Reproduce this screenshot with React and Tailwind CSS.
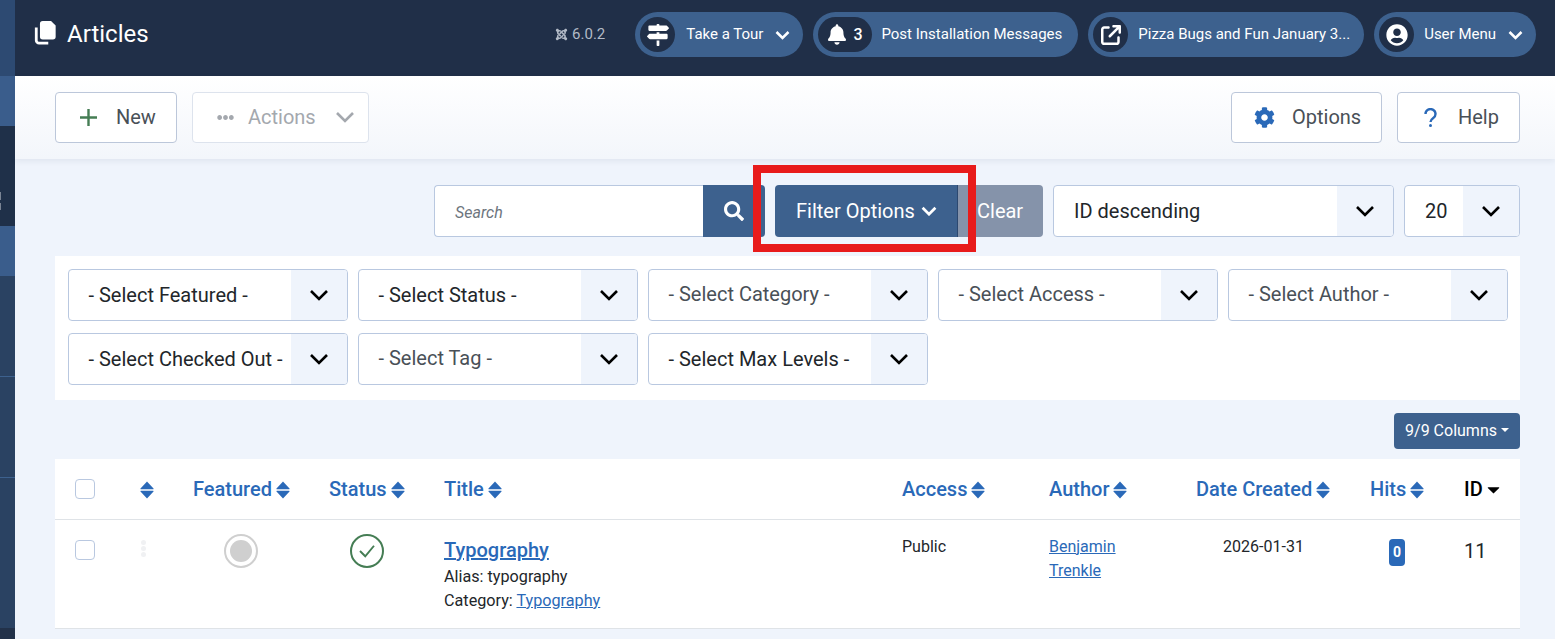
import { FaBell, FaCog, FaEllipsisH, FaJoomla, FaSearch, FaUserCircle, FaMapSigns } from "react-icons/fa";
import { FaArrowUpRightFromSquare } from "react-icons/fa6";

function Chevron({ className, weight = "2.6" }) {
  return (
    <svg viewBox="0 0 20 12" fill="none" stroke="currentColor" strokeWidth={weight} className={className}>
      <path d="M2 2l8 8 8-8" />
    </svg>
  );
}

function ArticlesIcon() {
  return (
    <svg viewBox="0 0 24 26" className="w-[23px] h-[24px] mb-[3px] text-white" fill="currentColor">
      <path d="M9 0h9l5 5v12a3 3 0 0 1-3 3H9a3 3 0 0 1-3-3V3a3 3 0 0 1 3-3z" />
      <path d="M4 6v14a3 3 0 0 0 3 3h10" fill="none" stroke="currentColor" strokeWidth="3" transform="translate(-2 1)" />
    </svg>
  );
}

function Pill({ icon, label, chevron, circle = "w-[35px]", text }) {
  return (
    <div className="flex items-center h-[45px] rounded-full bg-[#3d618e] pl-[5px] text-white">
      <span className={`flex items-center justify-center h-[35px] rounded-full bg-[#202f48] ${circle}`}>{icon}</span>
      <span className={`text-[15px] ${text}`}>{label}</span>
      {chevron && <Chevron weight="3.4" className="w-[15px] h-[10px] ml-[12px] mr-[13px]" />}
    </div>
  );
}

function ToolButton({ children, className }) {
  return (
    <button className={`flex items-center h-[51px] pb-[1px] rounded-[4px] border border-[#bcc7da] bg-white text-[20px] text-[#495057] ${className}`}>
      {children}
    </button>
  );
}

function Select({ label, muted, pad = "pl-[20px]", className = "" }) {
  return (
    <div className={`flex items-stretch h-[52px] rounded-[4px] border border-[#b9c8e0] bg-white overflow-hidden ${className}`}>
      <span className={`flex-1 flex items-center ${pad} text-[20px] whitespace-nowrap overflow-hidden ${muted ? "text-[#495057] pb-[2px]" : "text-[#22262a]"}`}>{label}</span>
      <span className="flex items-center justify-center w-[56px] bg-[#eff4fc] text-black">
        <Chevron className="w-[20px] h-[12px]" />
      </span>
    </div>
  );
}

function Sort({ className = "ml-[4px]" }) {
  return (
    <svg viewBox="0 0 14 18" fill="#2a69b8" className={`inline-block w-[14px] h-[18px] align-[-3px] ${className}`}>
      <path d="M7 0.5L13.5 7.5a0.5 0.5 0 0 1-0.4 0.8H0.9a0.5 0.5 0 0 1-0.4-0.8z" />
      <path d="M7 17.5L13.5 10.5a0.5 0.5 0 0 0-0.4-0.8H0.9a0.5 0.5 0 0 0-0.4 0.8z" />
    </svg>
  );
}

const filters = [
  ["- Select Featured -", false],
  ["- Select Status -", false],
  ["- Select Category -", true],
  ["- Select Access -", true],
  ["- Select Author -", true],
  ["- Select Checked Out -", false],
  ["- Select Tag -", true],
  ["- Select Max Levels -", false],
];

const th = "pl-[15px] text-left font-medium text-[20px] text-[#2a69b8] whitespace-nowrap";
const td = "pl-[15px] align-top";

export default function App() {
  return (
    <div className="relative flex h-[639px] w-[1555px] overflow-hidden bg-[#eff4fc] font-['Roboto',sans-serif]">
      {/* sidebar sliver */}
      <aside className="flex flex-col w-[15px] shrink-0 bg-[#2a4262]">
        <div className="h-[76px] bg-[#2d4a72]" />
        <div className="h-[50px] bg-[#3a5d8c]" />
        <div className="h-[100px] pt-[66px] bg-[#1f3049]">
          <div className="w-[1px] h-[8px] bg-[#7a8494]" />
          <div className="w-[1px] h-[7px] mt-[3px] bg-[#7a8494]" />
        </div>
        <div className="h-[50px] bg-[#3a5d8c]" />
        <div className="h-[101px] border-b border-[#3d618e]" />
        <div className="h-[101px] border-b border-[#3d618e]" />
        <div className="flex-1" />
        <div className="h-[11px] bg-[#223149]" />
      </aside>

      <main className="flex-1 min-w-0">
        <header className="flex items-center h-[76px] bg-[#202f48] pl-[19px] pr-[19px] pb-[7px]">
          <ArticlesIcon />
          <h1 className="ml-[10px] mb-[2px] text-[24px] text-white">Articles</h1>
          <div className="ml-auto flex items-center gap-[10px]">
            <span className="flex items-center mr-[20px] text-[15px] text-[#b2bac6]">
              <FaJoomla className="w-[13px] h-[13px] mr-[4px]" />
              6.0.2
            </span>
            <Pill icon={<FaMapSigns className="w-[22px] h-[22px]" />} label="Take a Tour" chevron text="ml-[11px]" />
            <Pill
              icon={<span className="flex items-center gap-[7px] text-[16px] font-medium"><FaBell className="w-[18px] h-[21px]" />3</span>}
              circle="w-[54px]"
              label="Post Installation Messages"
              text="ml-[9px] mr-[16px]"
            />
            <Pill icon={<FaArrowUpRightFromSquare className="w-[20px] h-[20px]" />} label="Pizza Bugs and Fun January 3..." text="ml-[10px] mr-[14px]" />
            <Pill icon={<FaUserCircle className="w-[22px] h-[22px]" />} label="User Menu" chevron text="ml-[10px]" />
          </div>
        </header>

        <div className="flex items-center h-[83px] pl-[40px] pr-[35px] bg-gradient-to-b from-white to-[#f3f6fb] shadow-[0_2px_6px_rgba(32,47,72,0.08)]">
          <ToolButton className="w-[122px] pl-[24px]">
            <svg viewBox="0 0 17 17" fill="none" stroke="#457d54" strokeWidth="2.4" className="w-[17px] h-[17px]">
              <path d="M8.5 0v17M0 8.5h17" />
            </svg>
            <span className="ml-[19px]">New</span>
          </ToolButton>
          <ToolButton className="w-[177px] ml-[15px] pl-[24px] border-[#dde3ed] text-[#a4a8ae]">
            <FaEllipsisH className="w-[17px] h-[17px]" />
            <span className="ml-[14px]">Actions</span>
            <Chevron className="w-[20px] h-[12px] ml-[19px]" />
          </ToolButton>
          <ToolButton className="w-[151px] ml-auto pl-[22px]">
            <FaCog className="w-[21px] h-[21px] text-[#2a69b8]" />
            <span className="ml-[17px]">Options</span>
          </ToolButton>
          <ToolButton className="w-[123px] ml-[15px] pl-[26px]">
            <svg viewBox="0 0 13 19" fill="none" stroke="#2a69b8" strokeWidth="2.4" className="w-[13px] h-[19px]">
              <path d="M1.5 6a5 4.8 0 1 1 7.8 3.9C7.4 11.2 6.5 12 6.5 14" />
              <circle cx="6.5" cy="17.5" r="1.5" fill="#2a69b8" stroke="none" />
            </svg>
            <span className="ml-[21px]">Help</span>
          </ToolButton>
        </div>

        <div className="pl-[40px] pr-[35px]">
          <div className="flex justify-end gap-[10px] mt-[26px]">
            <div className="flex h-[52px] w-[331px]">
              <div className="flex items-center flex-1 pl-[20px] pt-[3px] rounded-l-[4px] border border-r-0 border-[#b9c8e0] bg-white text-[16px] italic text-[#6d757e]">Search</div>
              <button className="flex items-center justify-center w-[62px] rounded-r-[4px] bg-[#3d618e] text-white">
                <FaSearch className="w-[20px] h-[20px]" />
              </button>
            </div>
            <div className="flex h-[52px]">
              <button className="flex items-center w-[183px] pl-[21px] rounded-l-[4px] bg-[#3d618e] border-r border-[#2c4870] text-[20px] text-white">
                Filter Options
                <Chevron weight="3.4" className="w-[16px] h-[10px] ml-[6px]" />
              </button>
              <button className="w-[85px] text-left rounded-r-[4px] bg-[#8593aa] pl-[19px] text-[20px] text-white">Clear</button>
            </div>
            <Select label="ID descending" className="w-[341px]" />
            <Select label="20" className="w-[116px]" />
          </div>

          <div className="grid grid-cols-[repeat(5,280px)] gap-x-[10px] gap-y-[12px] mt-[19px] pt-[13px] pb-[15px] px-[13px] bg-white">
            {filters.map(([label, muted]) => (
              <Select key={label} label={label} muted={muted} pad="pl-[19.5px]" />
            ))}
          </div>

          <div className="flex justify-end mt-[13px]">
            <button className="flex items-center h-[36px] px-[11px] rounded-[4px] bg-[#3d618e] text-[16px] text-white">
              9/9 Columns
              <span className="ml-[4px] mb-[2px] border-x-[4px] border-x-transparent border-t-[4px] border-t-white" />
            </button>
          </div>

          <table className="mt-[10px] w-full table-fixed bg-white border-collapse">
            <colgroup>
              <col className="w-[70px]" />
              <col className="w-[53px]" />
              <col className="w-[136px]" />
              <col className="w-[115px]" />
              <col className="w-[458px]" />
              <col className="w-[147px]" />
              <col className="w-[147px]" />
              <col className="w-[174px]" />
              <col className="w-[94px]" />
              <col className="w-[71px]" />
            </colgroup>
            <thead>
              <tr className="h-[60px] border-b border-[#dfe3e7]">
                <th className="pl-[20px] text-left">
                  <span className="block w-[20px] h-[20px] rounded-[4px] border border-[#b9c8e0]" />
                </th>
                <th className={th}><Sort className="" /></th>
                <th className={th}>Featured<Sort /></th>
                <th className={th}>Status<Sort /></th>
                <th className={th}>Title<Sort /></th>
                <th className={th}>Access<Sort /></th>
                <th className={th}>Author<Sort /></th>
                <th className={th}>Date Created<Sort /></th>
                <th className={th}>Hits<Sort /></th>
                <th className={`${th} !text-black`}>
                  ID
                  <svg viewBox="0 0 14 8" fill="black" className="inline-block w-[13px] h-[7px] ml-[4px] align-[2px]">
                    <path d="M7 7.5L13.5 1a0.5 0.5 0 0 0-0.4-0.8H0.9A0.5 0.5 0 0 0 0.5 1z" />
                  </svg>
                </th>
              </tr>
            </thead>
            <tbody>
              <tr className="h-[109px] border-b border-[#dfe3e7] text-[16px] text-[#22262a]">
                <td className="pl-[20px] pt-[20px] align-top">
                  <span className="block w-[20px] h-[20px] rounded-[4px] border border-[#b9c8e0]" />
                </td>
                <td className={`${td} pt-[20px]`}>
                  <span className="flex flex-col gap-[1px] w-[5px] ml-[1px] items-center">
                    <span className="w-[5px] h-[5px] rounded-full bg-[#f0f1f3]" />
                    <span className="w-[5px] h-[5px] rounded-full bg-[#f0f1f3]" />
                    <span className="w-[5px] h-[5px] rounded-full bg-[#f0f1f3]" />
                  </span>
                </td>
                <td className={`${td} pt-[14px]`}>
                  <span className="ml-[31px] flex items-center justify-center w-[34px] h-[34px] rounded-full border-[2px] border-[#cfcfcf]">
                    <span className="w-[22px] h-[22px] rounded-full bg-[#cfcfcf]" />
                  </span>
                </td>
                <td className={`${td} pt-[14px]`}>
                  <span className="ml-[21px] flex items-center justify-center w-[34px] h-[34px] rounded-full border-[2px] border-[#457d54] text-[#457d54]">
                    <svg viewBox="0 0 20 16" fill="none" stroke="currentColor" strokeWidth="2.2" className="w-[18px] h-[14px]"><path d="M2 8l6 6L18 2" /></svg>
                  </span>
                </td>
                <td className={`${td} pt-[16px]`}>
                  <a className="block text-[20px] font-medium leading-[28px] text-[#2a69b8] underline">Typography</a>
                  <div className="mt-[1px] leading-[24px] text-[16.2px]">Alias: typography</div>
                  <div className="leading-[24px] text-[16.2px]">Category: <a className="text-[#2a69b8] underline">Typography</a></div>
                </td>
                <td className={`${td} pt-[15px] leading-[24px]`}>Public</td>
                <td className={`${td} pt-[15px] leading-[24px] pr-[60px]`}><a className="text-[#2a69b8] underline">Benjamin Trenkle</a></td>
                <td className={`${td} pt-[15px] leading-[24px] pr-[24px] text-center`}>2026-01-31</td>
                <td className={`${td} pt-[19px]`}>
                  <span className="ml-[19px] flex items-center justify-center w-[16px] h-[27px] rounded-[4px] bg-[#2a69b8] text-white text-[14px] font-bold">0</span>
                </td>
                <td className={`${td} pt-[16px] text-[20px]`}>11</td>
              </tr>
            </tbody>
          </table>
        </div>
      </main>

      {/* annotation box drawn over the screenshot */}
      <div className="absolute left-[753px] top-[165px] w-[223px] h-[87px] border-[8px] border-[#e81b1b] pointer-events-none" />
    </div>
  );
}
